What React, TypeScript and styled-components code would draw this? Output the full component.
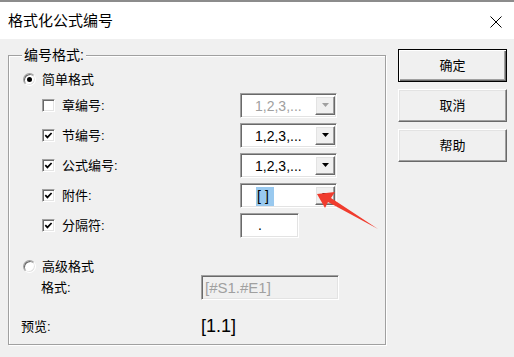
import React from 'react';
import styled, { createGlobalStyle, css } from 'styled-components';

const GlobalStyle = createGlobalStyle`
  html, body {
    margin: 0;
    padding: 0;
    background: #f0f0f0;
  }
  * {
    box-sizing: border-box;
  }
`;

const UI_FONT = `"Liberation Sans", "Noto Sans CJK SC", sans-serif`;

const sunken = css`
  border: 1px solid;
  border-color: #a0a0a0 #ffffff #ffffff #a0a0a0;
  box-shadow: inset 1px 1px 0 #696969, inset -1px -1px 0 #e3e3e3;
`;

const raised = css`
  border: 1px solid;
  border-color: #ffffff #696969 #696969 #ffffff;
  box-shadow: inset -1px -1px 0 #a0a0a0, inset 1px 1px 0 #e3e3e3;
`;

const Window = styled.div`
  position: relative;
  width: 514px;
  height: 357px;
  background: #f0f0f0;
  font-family: ${UI_FONT};
  color: #000;
  overflow: hidden;
`;

const TitleBar = styled.div`
  height: 39px;
  border-top: 2px solid #8c8c8c;
  background: #fff;
  display: flex;
  align-items: center;
  justify-content: space-between;
  padding: 0 12px 0 8px;
`;

const Title = styled.span`
  font-size: 15px;
  line-height: 15px;
  margin-top: -1px;
`;

const CloseIcon = styled.svg`
  width: 12px;
  height: 12px;
  margin-top: 2px;
`;

const Body = styled.div`
  display: flex;
  align-items: flex-start;
  padding: 10px 0 0 8px;
`;

const GroupBox = styled.div`
  position: relative;
  width: 378px;
  height: 290px;
  margin-top: 6px;
  margin-right: 12px;
  border: 1px solid #a0a0a0;
  box-shadow: inset 1px 1px 0 #fff, 1px 1px 0 #fff;
  padding-top: 13px;
  display: flex;
  flex-direction: column;
`;

const Legend = styled.span`
  position: absolute;
  top: -8px;
  left: 13px;
  padding: 0 2px;
  background: #f0f0f0;
  font-size: 14px;
  line-height: 14px;
`;

const Label = styled.span<{ $size?: number }>`
  font-size: ${({ $size }) => $size ?? 13}px;
  line-height: 1;
  white-space: nowrap;
`;

const RadioRow = styled.div<{ $height: number; $top?: number }>`
  display: flex;
  align-items: center;
  gap: 6px;
  height: ${({ $height }) => $height}px;
  margin-top: ${({ $top }) => $top ?? 0}px;
  padding-left: 14px;
`;

const Radio = styled.span<{ $checked?: boolean }>`
  position: relative;
  width: 13px;
  height: 13px;
  border-radius: 50%;
  background: #fff;
  border: 1px solid;
  border-color: #a0a0a0 #ffffff #ffffff #a0a0a0;
  box-shadow: inset 1px 1px 0 #696969, inset -1px -1px 0 #e3e3e3;
  display: flex;
  align-items: center;
  justify-content: center;
  &::after {
    content: '';
    display: ${({ $checked }) => ($checked ? 'block' : 'none')};
    width: 5px;
    height: 5px;
    border-radius: 50%;
    background: #000;
  }
`;

const CheckList = styled.div`
  display: flex;
  flex-direction: column;
  margin-top: 1px;
`;

const CheckRow = styled.div`
  display: flex;
  align-items: center;
  height: 30px;
  padding-left: 33px;
`;

const CheckLabel = styled.div`
  display: flex;
  align-items: center;
  gap: 7px;
  width: 198px;
`;

const CheckBox = styled.span`
  width: 13px;
  height: 13px;
  background: #fff;
  ${sunken};
  display: flex;
  align-items: center;
  justify-content: center;
`;

const CheckMark = styled.svg`
  width: 9px;
  height: 9px;
`;

const Combo = styled.div<{ $disabled?: boolean }>`
  display: flex;
  align-items: center;
  width: 97px;
  height: 25px;
  background: #fff;
  ${sunken};
  padding: 2px 1px 2px 14px;
  font-size: 14px;
  line-height: 1;
  color: ${({ $disabled }) => ($disabled ? '#a0a0a0' : '#000')};
`;

const ComboText = styled.span`
  flex: 1;
  margin-top: 1px;
`;

const Selected = styled.span`
  background: #99c9ef;
  padding: 1px 1px 2px 1px;
  letter-spacing: 4px;
  margin-left: 1px;
`;

const DropButton = styled.span`
  width: 20px;
  height: 100%;
  background: #f0f0f0;
  ${raised};
  display: flex;
  align-items: center;
  justify-content: center;
`;

const DropArrow = styled.svg`
  width: 7px;
  height: 4px;
`;

const TextField = styled.div<{ $width: number; $disabled?: boolean }>`
  width: ${({ $width }) => $width}px;
  height: 25px;
  background: ${({ $disabled }) => ($disabled ? '#f0f0f0' : '#fff')};
  ${sunken};
  display: flex;
  align-items: center;
  font-size: ${({ $disabled }) => ($disabled ? 15 : 14)}px;
  line-height: 1;
  color: ${({ $disabled }) => ($disabled ? '#a0a0a0' : '#000')};
  padding-left: ${({ $disabled }) => ($disabled ? 3 : 17)}px;
`;

const FieldRow = styled.div<{ $height: number; $top?: number; $indent: number; $labelWidth: number }>`
  display: flex;
  align-items: center;
  height: ${({ $height }) => $height}px;
  margin-top: ${({ $top }) => $top ?? 0}px;
  padding-left: ${({ $indent }) => $indent}px;
  & > ${Label} {
    width: ${({ $labelWidth }) => $labelWidth}px;
  }
`;

const ButtonColumn = styled.div`
  display: flex;
  flex-direction: column;
  gap: 7px;
`;

const Button = styled.button<{ $default?: boolean }>`
  width: 109px;
  height: 33px;
  padding: 0;
  background: #f0f0f0;
  font-family: ${UI_FONT};
  font-size: 13px;
  line-height: 1;
  color: #000;
  border: 1px solid;
  border-color: #ffffff #696969 #696969 #ffffff;
  box-shadow: inset -1px -1px 0 #a0a0a0, inset 1px 1px 0 #e3e3e3;
  ${({ $default }) =>
    $default &&
    css`
      border-color: #000;
      box-shadow: inset 1px 1px 0 #fff, inset -1px -1px 0 #696969, inset -2px -2px 0 #a0a0a0;
    `}
`;

const Overlay = styled.svg`
  position: absolute;
  left: 0;
  top: 0;
  width: 514px;
  height: 357px;
  pointer-events: none;
`;

const Check = () => (
  <CheckMark viewBox="0 0 9 9">
    <polyline points="1.3,4.2 3.4,6.4 7.6,2" fill="none" stroke="#000" strokeWidth="1.7" />
  </CheckMark>
);

const Arrow = ({ disabled }: { disabled?: boolean }) => (
  <DropArrow viewBox="0 0 7 4">
    <polygon points="0,0 7,0 3.5,4" fill={disabled ? '#a0a0a0' : '#000'} />
  </DropArrow>
);

type Item = {
  label: string;
  checked: boolean;
  value: string;
  disabled?: boolean;
  selected?: boolean;
};

const items: Item[] = [
  { label: '章编号:', checked: false, value: '1,2,3,...', disabled: true },
  { label: '节编号:', checked: true, value: '1,2,3,...' },
  { label: '公式编号:', checked: true, value: '1,2,3,...' },
  { label: '附件:', checked: true, value: '[]', selected: true },
];

const App: React.FC = () => (
  <>
    <GlobalStyle />
    <Window>
      <TitleBar>
        <Title>格式化公式编号</Title>
        <CloseIcon viewBox="0 0 12 12">
          <path d="M0.5 0.5 L11.5 11.5 M11.5 0.5 L0.5 11.5" stroke="#000" strokeWidth="1" />
        </CloseIcon>
      </TitleBar>
      <Body>
        <GroupBox>
          <Legend>编号格式:</Legend>
          <RadioRow $height={20}>
            <Radio $checked />
            <Label>简单格式</Label>
          </RadioRow>
          <CheckList>
            {items.map((item) => (
              <CheckRow key={item.label}>
                <CheckLabel>
                  <CheckBox>{item.checked && <Check />}</CheckBox>
                  <Label>{item.label}</Label>
                </CheckLabel>
                <Combo $disabled={item.disabled}>
                  <ComboText>
                    {item.selected ? <Selected>{item.value}</Selected> : item.value}
                  </ComboText>
                  <DropButton>
                    <Arrow disabled={item.disabled} />
                  </DropButton>
                </Combo>
              </CheckRow>
            ))}
            <CheckRow>
              <CheckLabel>
                <CheckBox>
                  <Check />
                </CheckBox>
                <Label>分隔符:</Label>
              </CheckLabel>
              <TextField $width={59}>.</TextField>
            </CheckRow>
          </CheckList>
          <RadioRow $height={16} $top={18}>
            <Radio />
            <Label>高级格式</Label>
          </RadioRow>
          <FieldRow $height={26} $indent={32} $labelWidth={160}>
            <Label>格式:</Label>
            <TextField $width={138} $disabled>
              [#S1.#E1]
            </TextField>
          </FieldRow>
          <FieldRow $height={20} $top={16} $indent={12} $labelWidth={180}>
            <Label>预览:</Label>
            <Label $size={18}>[1.1]</Label>
          </FieldRow>
        </GroupBox>
        <ButtonColumn>
          <Button $default>确定</Button>
          <Button>取消</Button>
          <Button>帮助</Button>
        </ButtonColumn>
      </Body>
      <Overlay viewBox="0 0 514 357">
        <polygon
          points="317,194 335,192 331,198 378,229 328,202 325,208"
          fill="#f03c2e"
        />
      </Overlay>
    </Window>
  </>
);

export default App;
